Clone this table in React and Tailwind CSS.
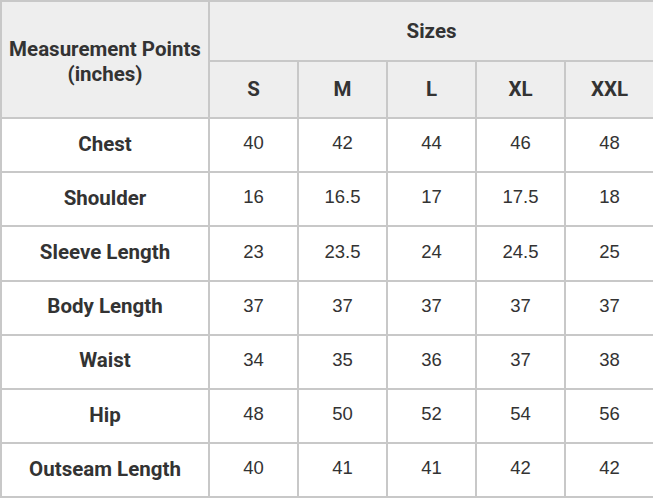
import React from "react";

const sizes = ["S", "M", "L", "XL", "XXL"];

const rows = [
  { label: "Chest", values: ["40", "42", "44", "46", "48"] },
  { label: "Shoulder", values: ["16", "16.5", "17", "17.5", "18"] },
  { label: "Sleeve Length", values: ["23", "23.5", "24", "24.5", "25"] },
  { label: "Body Length", values: ["37", "37", "37", "37", "37"] },
  { label: "Waist", values: ["34", "35", "36", "37", "38"] },
  { label: "Hip", values: ["48", "50", "52", "54", "56"] },
  { label: "Outseam Length", values: ["40", "41", "41", "42", "42"] },
];

const App = () => {
  return (
    <div className="w-[653px] h-[498px] bg-white">
      <table className="w-[653px] table-fixed border-collapse text-[#333]">
        <colgroup>
          <col className="w-[208px]" />
          {sizes.map((s) => (
            <col key={s} className="w-[89px]" />
          ))}
        </colgroup>
        <thead className="bg-[#eeeeee] font-['Roboto',sans-serif] font-bold text-[20.5px]">
          <tr className="h-[60px]">
            <th
              rowSpan={2}
              className="border-2 border-[#c8c8c8] leading-[25px] px-0 pt-1"
            >
              Measurement Points
              <br />
              (inches)
            </th>
            <th colSpan={5} className="border-2 border-[#c8c8c8]">
              Sizes
            </th>
          </tr>
          <tr className="h-[57px]">
            {sizes.map((s) => (
              <th key={s} className="border-2 border-[#c8c8c8]">
                {s}
              </th>
            ))}
          </tr>
        </thead>
        <tbody>
          {rows.map((row) => (
            <tr key={row.label} className="h-[54.2px]">
              <td className="border-2 border-[#c8c8c8] text-center font-['Roboto',sans-serif] font-bold text-[20.5px] pb-0.5">
                {row.label}
              </td>
              {row.values.map((v, i) => (
                <td
                  key={i}
                  className="border-2 border-[#c8c8c8] text-center font-['Liberation_Sans',Arial,sans-serif] text-[18.5px] pb-1"
                >
                  {v}
                </td>
              ))}
            </tr>
          ))}
        </tbody>
      </table>
    </div>
  );
};

export default App;
